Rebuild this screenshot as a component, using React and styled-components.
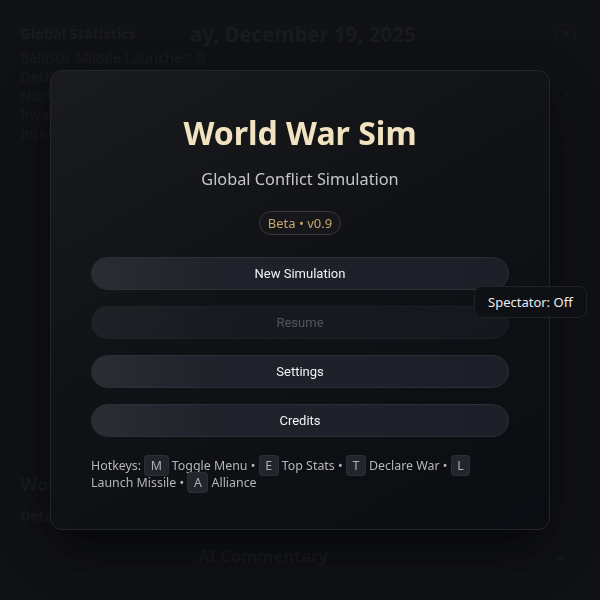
import React from 'react';
import styled, { createGlobalStyle } from 'styled-components';

const GlobalStyle = createGlobalStyle`
  html, body {
    margin: 0;
    padding: 0;
    background: #121418;
  }
  body {
    font-family: 'Noto Sans', 'DejaVu Sans', sans-serif;
  }
  * { box-sizing: border-box; }
`;

const hotkeys = [
  { key: 'M', label: 'Toggle Menu' },
  { key: 'E', label: 'Top Stats' },
  { key: 'T', label: 'Declare War' },
  { key: 'L', label: 'Launch Missile' },
  { key: 'A', label: 'Alliance' },
];

const menuItems = [
  { label: 'New Simulation' },
  { label: 'Resume', disabled: true },
  { label: 'Settings' },
  { label: 'Credits' },
];

export default function App() {
  return (
    <>
      <GlobalStyle />
      <Page>
        <BackTop>
          <StatsPanel>
            <PanelTitle>Global Statistics</PanelTitle>
            <StatLine>Ballistic Missile Launches: 0</StatLine>
            <StatLine>Declared Wars: 0</StatLine>
            <StatLine>Nuclear Strikes: 0</StatLine>
            <StatLine>Invasions: 0</StatLine>
            <StatLine>Interceptions: 0</StatLine>
          </StatsPanel>
          <DateText>ay, December 19, 2025</DateText>
          <SideCol>
            <SideBtn>×</SideBtn>
            <SideGlyph>⌄</SideGlyph>
            <SideGlyph>·</SideGlyph>
          </SideCol>
        </BackTop>
        <BackBottom>
          <PanelTitle $big>World Events</PanelTitle>
          <SubTitle>Details</SubTitle>
          <Commentary>
            <span>AI Commentary</span>
            <Chevron>⌄</Chevron>
          </Commentary>
        </BackBottom>
      </Page>

      <Overlay>
        <Modal>
          <Title>World War Sim</Title>
          <Subtitle>Global Conflict Simulation</Subtitle>
          <Badge>Beta • v0.9</Badge>
          <Menu>
            {menuItems.map((item) => (
              <MenuButton key={item.label} disabled={item.disabled}>
                {item.label}
              </MenuButton>
            ))}
          </Menu>
          <Hotkeys>
            Hotkeys:{' '}
            {hotkeys.map((h, i) => (
              <React.Fragment key={h.key}>
                <Kbd>{h.key}</Kbd> {h.label}
                {i < hotkeys.length - 1 ? ' • ' : ''}
              </React.Fragment>
            ))}
          </Hotkeys>
        </Modal>
        <Tooltip>Spectator: Off</Tooltip>
      </Overlay>
    </>
  );
}

const Page = styled.div`
  width: 600px;
  height: 600px;
  padding: 20px 24px 0 20px;
  display: flex;
  flex-direction: column;
  justify-content: space-between;
  background: #16181c;
  color: #292b30;
  overflow: hidden;
`;

const BackTop = styled.div`
  display: flex;
  align-items: flex-start;
`;

const StatsPanel = styled.div`
  width: 170px;
  display: flex;
  flex-direction: column;
`;

const PanelTitle = styled.div`
  font-size: ${(p) => (p.$big ? '18px' : '14.5px')};
  font-weight: 700;
  line-height: 26px;
  margin-bottom: 2px;
  white-space: nowrap;
`;

const StatLine = styled.div`
  font-size: 14.4px;
  line-height: 19px;
  white-space: nowrap;
`;

const DateText = styled.div`
  font-size: 20.5px;
  font-weight: 700;
  line-height: 28px;
  flex: 1;
`;

const SideCol = styled.div`
  width: 20px;
  display: flex;
  flex-direction: column;
  align-items: center;
  gap: 40px;
  padding-top: 4px;
`;

const SideBtn = styled.div`
  width: 20px;
  height: 20px;
  border: 1px solid #1f2125;
  border-radius: 4px;
  font-size: 12px;
  text-align: center;
  line-height: 18px;
`;

const SideGlyph = styled.div`
  font-size: 12px;
`;

const BackBottom = styled.div`
  display: flex;
  flex-direction: column;
  padding-bottom: 24px;
`;

const SubTitle = styled.div`
  font-size: 14px;
  font-weight: 700;
  line-height: 22px;
  margin-top: 6px;
`;

const Commentary = styled.div`
  position: relative;
  margin: 14px 10px 0 10px;
  padding: 0 70px 4px 0;
  border-bottom: 1px solid #1b1d21;
  text-align: center;
  font-size: 16.5px;
  font-weight: 700;
  line-height: 30px;
`;

const Chevron = styled.span`
  position: absolute;
  right: 0;
  top: 0;
  font-size: 14px;
`;

const Overlay = styled.div`
  position: fixed;
  inset: 0;
  display: flex;
  align-items: center;
  justify-content: center;
  background: rgba(10, 11, 14, 0.5);
`;

const Modal = styled.div`
  width: 500px;
  padding: 40px 40px 38px;
  border-radius: 12px;
  border: 1px solid #23252a;
  background: linear-gradient(150deg, #1a1b1e 0%, #101216 45%, #0b0d12 100%);
  box-shadow: 0 20px 50px rgba(0, 0, 0, 0.55);
  display: flex;
  flex-direction: column;
  align-items: center;
`;

const Title = styled.h1`
  margin: 0;
  font-size: 32px;
  font-weight: 700;
  line-height: 44px;
  color: #f1e3bf;
`;

const Subtitle = styled.p`
  margin: 12px 0 0;
  font-size: 16.3px;
  line-height: 24px;
  color: #c6c7c9;
`;

const Badge = styled.div`
  margin-top: 20px;
  height: 24px;
  padding: 0 8px;
  border-radius: 999px;
  border: 1px solid #3a3935;
  background: #16171a;
  color: #c9a46c;
  font-size: 13px;
  line-height: 22px;
`;

const Menu = styled.div`
  margin-top: 22px;
  width: 100%;
  display: flex;
  flex-direction: column;
  gap: 16px;
`;

const MenuButton = styled.button`
  height: 33px;
  width: 100%;
  border-radius: 999px;
  border: 1px solid #2c2f37;
  background: linear-gradient(90deg, #2a2d34 0%, #1f222a 30%, #1c1f28 100%);
  color: ${(p) => (p.disabled ? '#8a8b8e' : '#f2f2f2')};
  opacity: ${(p) => (p.disabled ? 0.55 : 1)};
  font-family: Roboto, 'Liberation Sans', sans-serif;
  font-size: 13px;
  cursor: pointer;
`;

const Hotkeys = styled.div`
  margin-top: 20px;
  width: 100%;
  font-size: 12.4px;
  line-height: 17px;
  color: #b5b6b8;
`;

const Kbd = styled.kbd`
  display: inline;
  font-family: 'Noto Sans', sans-serif;
  font-size: 12.4px;
  padding: 1px 5.5px;
  border-radius: 4px;
  border: 1px solid #2c2f35;
  background: #22252b;
  color: #aeb0b3;
`;

const Tooltip = styled.div`
  position: absolute;
  left: 474px;
  top: 286px;
  height: 32px;
  padding: 0 13px;
  display: flex;
  align-items: center;
  border-radius: 8px;
  border: 1px solid #202226;
  background: #0f1013;
  color: #ececec;
  font-size: 13px;
`;
